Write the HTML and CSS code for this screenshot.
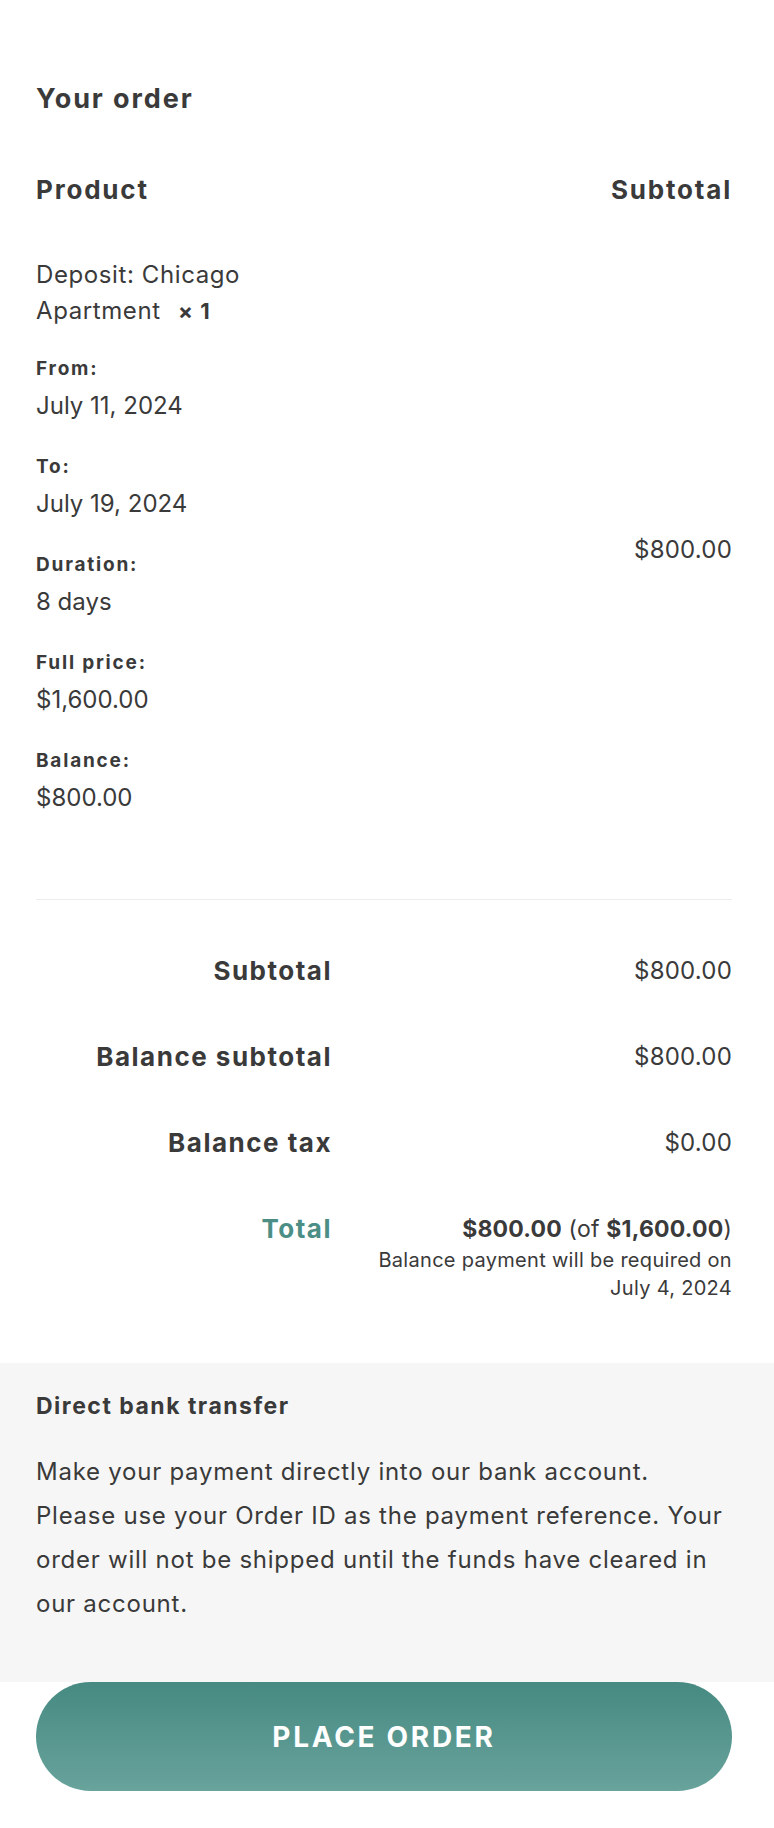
FILE: index.html
```html
<!DOCTYPE html>
<html lang="en">
<head>
<meta charset="utf-8">
<title>Your order</title>
<link rel="stylesheet" href="styles.css">
</head>
<body>
<div class="order">
  <h3 class="order-title">Your order</h3>
  <div class="head-row">
    <span>Product</span>
    <span>Subtotal</span>
  </div>
  <div class="item-row">
    <div class="item-info">
      <div class="item-name">Deposit: Chicago<br>Apartment <strong class="qty">&times;&nbsp;1</strong></div>
      <dl class="meta">
        <dt>From:</dt><dd>July 11, 2024</dd>
        <dt>To:</dt><dd>July 19, 2024</dd>
        <dt>Duration:</dt><dd>8 days</dd>
        <dt>Full price:</dt><dd>$1,600.00</dd>
        <dt>Balance:</dt><dd>$800.00</dd>
      </dl>
    </div>
    <div class="item-total">$800.00</div>
  </div>
  <div class="totals">
    <div class="t-label">Subtotal</div><div class="t-value">$800.00</div>
    <div class="t-label">Balance subtotal</div><div class="t-value">$800.00</div>
    <div class="t-label">Balance tax</div><div class="t-value">$0.00</div>
    <div class="t-label total">Total</div>
    <div class="t-value">
      <div class="grand"><strong>$800.00</strong> (of <strong>$1,600.00</strong>)</div>
      <div class="note">Balance payment will be required on<br>July 4, 2024</div>
    </div>
  </div>
</div>
<div class="payment">
  <div class="pay-title">Direct bank transfer</div>
  <p class="pay-text">Make your payment directly into our bank account.<br>Please use your Order ID as the payment reference. Your<br>order will not be shipped until the funds have cleared in<br>our account.</p>
</div>
<div class="actions">
  <button class="place">PLACE ORDER</button>
</div>
</body>
</html>
```
FILE: styles.css
```css
* { box-sizing: border-box; }
body {
  margin: 0;
  background: #fff;
  color: #3a3a3a;
  font-family: Inter, "DejaVu Sans", sans-serif;
}
.order {
  padding: 84px 42px 0 36px;
}
.order-title {
  margin: 0;
  font-size: 27px;
  line-height: 30px;
  font-weight: 700;
  letter-spacing: 1.9px;
}
.head-row {
  margin-top: 61px;
  display: flex;
  justify-content: space-between;
  font-size: 26px;
  line-height: 30px;
  font-weight: 700;
  letter-spacing: 1.8px;
}
.item-row {
  padding: 52px 0 86px;
  display: flex;
  justify-content: space-between;
  align-items: center;
  border-bottom: 1px solid #ededed;
}
.item-name {
  font-size: 24px;
  line-height: 36px;
  letter-spacing: 0.6px;
}
.qty { font-weight: 700; margin-left: 10px; font-size: 22px; letter-spacing: 1px; }
.meta { margin: 28px 0 0; }
.meta dt {
  font-size: 19px;
  line-height: 24px;
  font-weight: 700;
  letter-spacing: 1.8px;
}
.meta dd {
  margin: 10px 0 34px;
  font-size: 24px;
  line-height: 30px;
  letter-spacing: 0;
}
.meta dd:last-child { margin-bottom: 0; }
.item-total {
  padding-top: 30px;
  font-size: 24px;
  line-height: 30px;
  letter-spacing: 0.2px;
}
.totals {
  margin-top: 28px;
  display: grid;
  grid-template-columns: 296px 1fr;
  padding-bottom: 61px;
}
.t-label, .t-value {
  padding: 28px 0;
  text-align: right;
  font-size: 24px;
  line-height: 30px;
  letter-spacing: 0.2px;
}
.t-label { font-size: 26px; font-weight: 700; letter-spacing: 1.5px; }
.t-label.total { color: #4b8e86; padding-bottom: 0; }
.totals .t-value:last-child { padding-bottom: 0; }
.grand { font-size: 23px; line-height: 30px; letter-spacing: 0.2px; }
.note {
  margin-top: 2px;
  font-size: 20px;
  line-height: 28px;
  letter-spacing: 0.3px;
}
.payment {
  background: #f6f6f6;
  padding: 29px 42px 56px 36px;
}
.pay-title {
  font-size: 23px;
  line-height: 28px;
  font-weight: 700;
  letter-spacing: 1.5px;
}
.pay-text {
  margin: 30px 0 0;
  font-size: 24px;
  line-height: 44px;
  letter-spacing: 0.75px;
}
.actions {
  padding: 0 42px 37px 36px;
}
.place {
  display: block;
  width: 100%;
  height: 109px;
  border: 0;
  border-radius: 55px;
  background: linear-gradient(180deg, #468a82 0%, #68a39c 100%);
  color: #fff;
  font-family: inherit;
  font-size: 28px;
  font-weight: 700;
  letter-spacing: 2.7px;
  cursor: pointer;
}
```
